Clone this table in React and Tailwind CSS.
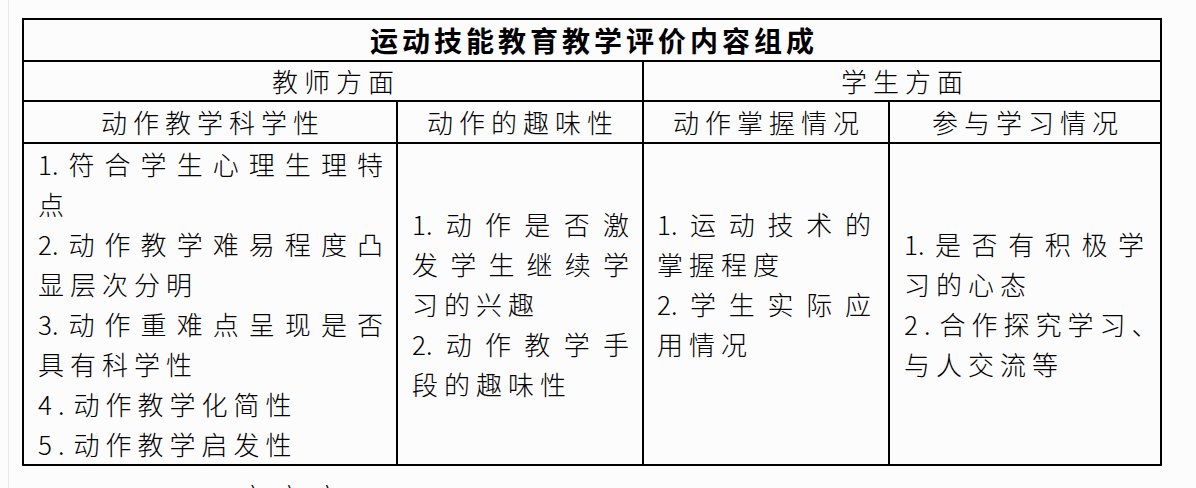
import React from "react";

const col1 = [
  { t: "1.符合学生心理生理特", j: true },
  { t: "点" },
  { t: "2.动作教学难易程度凸", j: true },
  { t: "显层次分明" },
  { t: "3.动作重难点呈现是否", j: true },
  { t: "具有科学性" },
  { t: "4.动作教学化简性" },
  { t: "5.动作教学启发性" },
];
const col2 = [
  { t: "1.动作是否激", j: true },
  { t: "发学生继续学", j: true },
  { t: "习的兴趣" },
  { t: "2.动作教学手", j: true },
  { t: "段的趣味性" },
];
const col3 = [
  { t: "1.运动技术的", j: true },
  { t: "掌握程度" },
  { t: "2.学生实际应", j: true },
  { t: "用情况" },
  { t: "\u00a0" },
];
const col4 = [
  { t: "1.是否有积极学", j: true },
  { t: "习的心态" },
  { t: "2.合作探究学习、" },
  { t: "与人交流等" },
];

function Line({ t, j }) {
  if (j) {
    const tokens = t.match(/\d+\.|./gu);
    return (
      <div className="flex justify-between h-[40px] items-center whitespace-nowrap">
        {tokens.map((k, i) => (
          <span key={i}>{k}</span>
        ))}
      </div>
    );
  }
  const m = t.match(/^(\d+\.)(.*)$/u);
  return (
    <div className="h-[40px] leading-[40px] whitespace-nowrap tracking-[6px]">
      {m ? (
        <>
          <span className="mr-[3px]">{m[1]}</span>
          {m[2]}
        </>
      ) : (
        t
      )}
    </div>
  );
}

function Body({ lines, className }) {
  return (
    <div className={"flex flex-col justify-center " + className}>
      {lines.map((l, i) => (
        <Line key={i} {...l} />
      ))}
    </div>
  );
}

function Head({ children, className }) {
  return (
    <div className={"flex items-center justify-center " + className}>
      <span className="tracking-[6px] mr-[-6px]">{children}</span>
    </div>
  );
}

export default function App() {
  return (
    <div className="w-[1196px] h-[488px] overflow-hidden bg-[#fdfcfd] font-['Noto_Sans_CJK_SC','Noto_Sans',sans-serif] font-light text-black text-[26px] leading-none">
      <div className="ml-[8px] h-full border-l border-[#e8e6e8] pt-[18px]">
        <div className="ml-[13px] w-[1140px] border-2 border-black grid grid-cols-[374px_246px_246px_270px] grid-rows-[42px_40px_42px_320px]">
          <div className="col-span-4 border-b-2 border-black flex items-center justify-center">
            <span className="font-bold text-[28px] tracking-[4px] mr-[-4px]">运动技能教育教学评价内容组成</span>
          </div>
          <Head className="col-span-2 border-b-2 border-r-2 border-black">教师方面</Head>
          <Head className="col-span-2 border-b-2 border-black">学生方面</Head>
          <Head className="border-b-2 border-r-2 border-black">动作教学科学性</Head>
          <Head className="border-b-2 border-r-2 border-black">动作的趣味性</Head>
          <Head className="border-b-2 border-r-2 border-black">动作掌握情况</Head>
          <Head className="border-b-2 border-black">参与学习情况</Head>
          <Body lines={col1} className="border-r-2 border-black pl-[14px] pr-[13px]" />
          <Body lines={col2} className="border-r-2 border-black pl-[14px] pr-[13px]" />
          <Body lines={col3} className="border-r-2 border-black pl-[13px] pr-[17px]" />
          <Body lines={col4} className="pl-[14px] pr-[16px]" />
        </div>
        <div className="mt-[17px] ml-[231px] tracking-[11px] whitespace-nowrap">文六方</div>
      </div>
    </div>
  );
}
